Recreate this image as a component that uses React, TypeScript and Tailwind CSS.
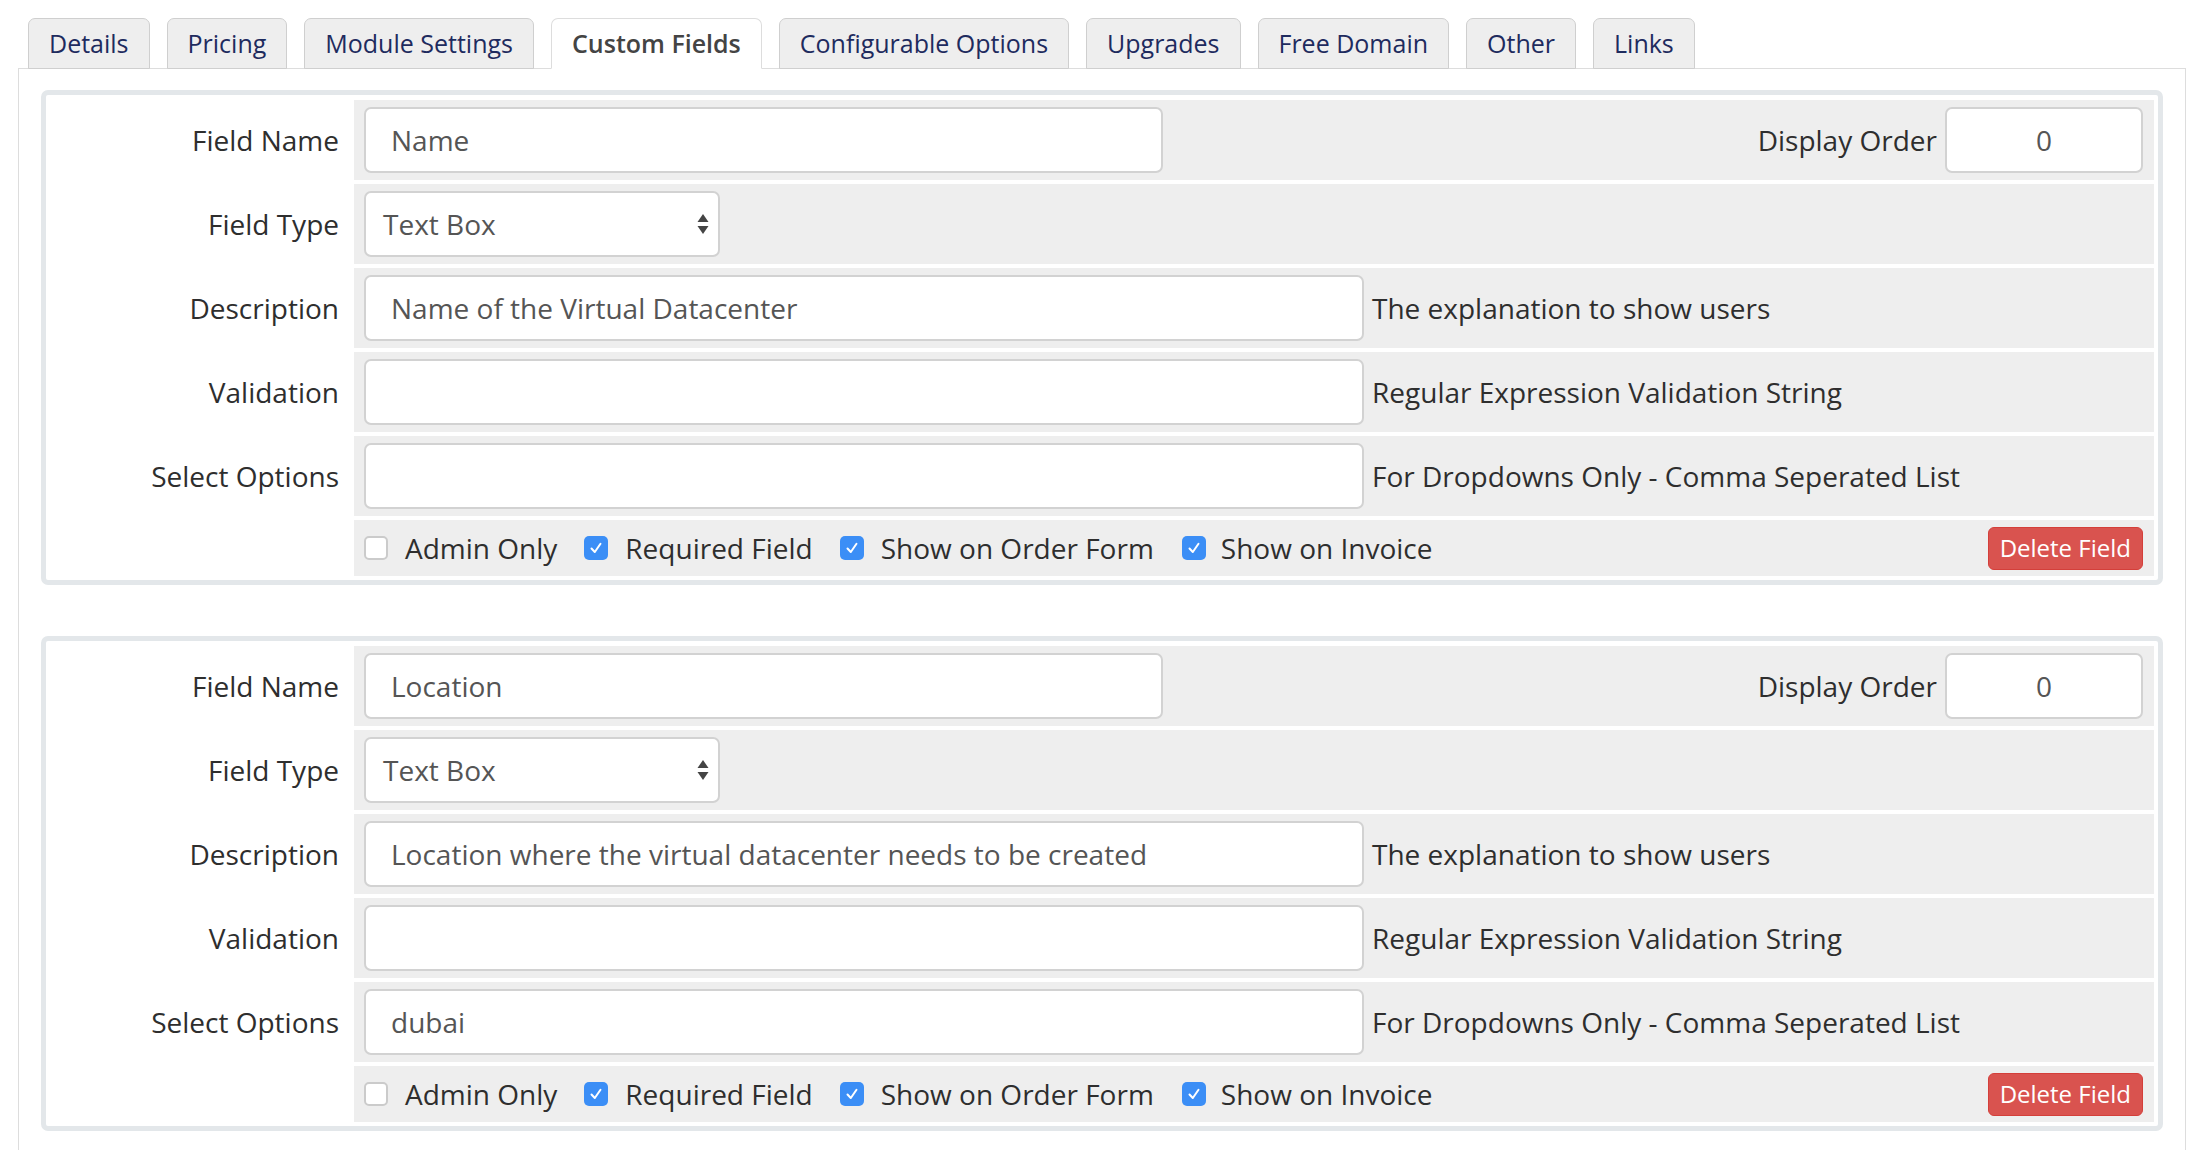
import React from "react";

const tabs = [
  "Details",
  "Pricing",
  "Module Settings",
  "Custom Fields",
  "Configurable Options",
  "Upgrades",
  "Free Domain",
  "Other",
  "Links",
];

function Input({ value, width, center }: { value: string; width: string; center?: boolean }) {
  return (
    <div
      className={`${width} h-[66px] shrink-0 bg-white border-2 border-[#d2d2d2] rounded-[7px] flex items-center text-[#555] ${
        center ? "justify-center" : "pl-[25px]"
      }`}
    >
      {value}
    </div>
  );
}

function Select({ value }: { value: string }) {
  return (
    <div className="w-[356px] h-[66px] shrink-0 bg-white border-2 border-[#d2d2d2] rounded-[7px] flex items-center pl-[17px] pr-[9px] text-[#555]">
      <span className="flex-1">{value}</span>
      <svg width="12" height="24" viewBox="0 0 12 24">
        <polygon points="6,2 11.5,10 0.5,10" fill="#444" />
        <polygon points="0.5,14 11.5,14 6,22" fill="#444" />
      </svg>
    </div>
  );
}

function Check({ checked }: { checked: boolean }) {
  if (!checked)
    return <div className="w-[24px] h-[24px] shrink-0 rounded-[5px] border-2 border-[#cbcbcb] bg-white" />;
  return (
    <div className="w-[24px] h-[24px] shrink-0 rounded-[5px] bg-[#3b8ef6] flex items-center justify-center">
      <svg width="14" height="14" viewBox="0 0 14 14">
        <polyline points="2.5,7.5 5.8,11 11.5,2.8" fill="none" stroke="white" strokeWidth="2" strokeLinecap="round" strokeLinejoin="round" />
      </svg>
    </div>
  );
}

function Row({ label, children, h = "h-[80px]" }: { label: string; children: React.ReactNode; h?: string }) {
  return (
    <div className="flex">
      <div className="w-[308px] shrink-0 pr-[15px] flex items-center justify-end text-[#2e2e2e]">{label}</div>
      <div className={`flex-1 ${h} bg-[#eeeeee] flex items-center pl-[10px] pr-[11px]`}>{children}</div>
    </div>
  );
}

function Card({ name, desc, options }: { name: string; desc: string; options: string }) {
  return (
    <div className="border-[5px] border-[#e3e7ea] rounded-[7px] bg-white pt-[5px] pb-[4px] pr-[4px] flex flex-col gap-[4px]">
      <Row label="Field Name">
        <Input value={name} width="w-[799px]" />
        <div className="ml-auto mr-[8px] text-[#2e2e2e]">Display Order</div>
        <Input value="0" width="w-[198px]" center />
      </Row>
      <Row label="Field Type">
        <Select value="Text Box" />
      </Row>
      <Row label="Description">
        <Input value={desc} width="w-[1000px]" />
        <span className="ml-[8px] text-[#2e2e2e]">The explanation to show users</span>
      </Row>
      <Row label="Validation">
        <Input value="" width="w-[1000px]" />
        <span className="ml-[8px] text-[#2e2e2e]">Regular Expression Validation String</span>
      </Row>
      <Row label="Select Options">
        <Input value={options} width="w-[1000px]" />
        <span className="ml-[8px] text-[#2e2e2e]">For Dropdowns Only - Comma Seperated List</span>
      </Row>
      <Row label="" h="h-[56px]">
        <div className="flex items-center gap-[17px]">
          <Check checked={false} />
          <span className="text-[#2e2e2e]">Admin Only</span>
        </div>
        <div className="flex items-center gap-[17px] ml-[27px]">
          <Check checked />
          <span className="text-[#2e2e2e]">Required Field</span>
        </div>
        <div className="flex items-center gap-[17px] ml-[27px]">
          <Check checked />
          <span className="text-[#2e2e2e]">Show on Order Form</span>
        </div>
        <div className="flex items-center gap-[15px] ml-[28px]">
          <Check checked />
          <span className="text-[#2e2e2e]">Show on Invoice</span>
        </div>
        <div className="ml-auto h-[43px] px-[11px] flex items-center bg-[#d9534f] border border-[#d43f3a] rounded-[6px] text-white text-[24px]">
          Delete Field
        </div>
      </Row>
    </div>
  );
}

export default function App() {
  return (
    <div className="w-[2202px] h-[1150px] bg-white overflow-hidden font-['Open_Sans',sans-serif] text-[28px] leading-none flex flex-col pl-[18px] pr-[16px]">
      <div className="flex gap-[17px] pl-[10px] pt-[18px] relative z-10 -mb-px">
        {tabs.map((t) => {
          const active = t === "Custom Fields";
          return (
            <div
              key={t}
              className={`h-[51px] px-[20px] flex items-center rounded-t-[7px] border text-[25px] ${
                active
                  ? "bg-white border-[#ddd] border-b-white text-[#444] font-semibold"
                  : "bg-[#eeeeee] border-[#cfcfcf] text-[#1e2b5e]"
              }`}
            >
              {t}
            </div>
          );
        })}
      </div>
      <div className="flex-1 border border-[#ddd] border-b-0 pt-[21px] px-[22px] flex flex-col gap-[51px]">
        <Card name="Name" desc="Name of the Virtual Datacenter" options="" />
        <Card name="Location" desc="Location where the virtual datacenter needs to be created" options="dubai" />
      </div>
    </div>
  );
}
